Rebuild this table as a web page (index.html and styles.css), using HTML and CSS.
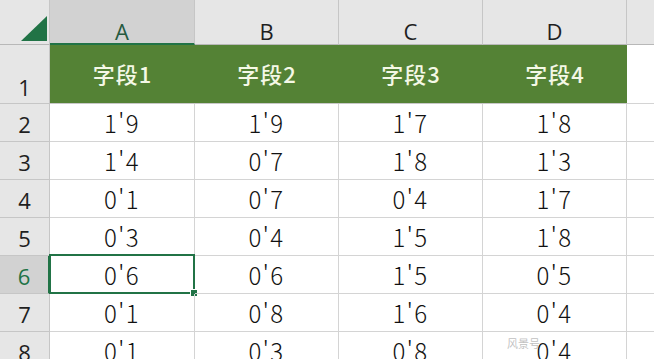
FILE: index.html
```html
<!DOCTYPE html>
<html lang="zh">
<head>
<meta charset="utf-8">
<link rel="stylesheet" href="styles.css">
</head>
<body>
<div class="sheet">
  <div class="corner"><svg class="tri" width="50" height="45" viewBox="0 0 50 45"><polygon points="21,41 47,41 47,16" fill="#217346"/></svg></div>
  <div class="colh sel">A</div>
  <div class="colh">B</div>
  <div class="colh">C</div>
  <div class="colh">D</div>
  <div class="colh last"></div>

  <div class="rowh r1">1</div>
  <div class="head">字段1</div>
  <div class="head">字段2</div>
  <div class="head">字段3</div>
  <div class="head">字段4</div>
  <div class="cell last"></div>

  <div class="rowh">2</div>
  <div class="cell">1'9</div><div class="cell">1'9</div><div class="cell">1'7</div><div class="cell">1'8</div><div class="cell last"></div>

  <div class="rowh">3</div>
  <div class="cell">1'4</div><div class="cell">0'7</div><div class="cell">1'8</div><div class="cell">1'3</div><div class="cell last"></div>

  <div class="rowh">4</div>
  <div class="cell">0'1</div><div class="cell">0'7</div><div class="cell">0'4</div><div class="cell">1'7</div><div class="cell last"></div>

  <div class="rowh">5</div>
  <div class="cell">0'3</div><div class="cell">0'4</div><div class="cell">1'5</div><div class="cell">1'8</div><div class="cell last"></div>

  <div class="rowh selrow">6</div>
  <div class="cell active">0'6<span class="frame"></span><span class="handle"></span></div><div class="cell">0'6</div><div class="cell">1'5</div><div class="cell">0'5</div><div class="cell last"></div>

  <div class="rowh">7</div>
  <div class="cell">0'1</div><div class="cell">0'8</div><div class="cell">1'6</div><div class="cell">0'4</div><div class="cell last"></div>

  <div class="rowh">8</div>
  <div class="cell">0'1</div><div class="cell">0'3</div><div class="cell">0'8</div><div class="cell">0'4</div><div class="cell last"></div>
</div>
<div class="watermark">风景号</div>
</body>
</html>
```
FILE: styles.css
```css
* { box-sizing: border-box; }
html, body { margin: 0; padding: 0; background: #fff; overflow: hidden; }
body { width: 654px; height: 359px; position: relative; }
.sheet {
  display: grid;
  grid-template-columns: 50px 145px 144px 144px 144px 27px;
  grid-template-rows: 45px 59px repeat(7, 38px);
  font-family: "Noto Sans CJK SC", "Noto Sans", sans-serif;
}
.corner {
  background: #e6e6e6;
  border-right: 1px solid #c6c6c6;
  border-bottom: 1px solid #b8b8b8;
  position: relative;
}
.tri { display: block; }
.colh {
  background: #e6e6e6;
  border-right: 1px solid #c6c6c6;
  border-bottom: 1px solid #b8b8b8;
  font-family: "Open Sans", "Liberation Sans", sans-serif;
  font-size: 22px;
  font-weight: 400;
  color: #1f1f1f;
  display: flex;
  align-items: flex-end;
  justify-content: center;
  padding-bottom: 2px;
  line-height: 1;
}
.colh.sel {
  background: #d2d2d2;
  color: #265a40;
  border-bottom: 2px solid #217346;
  padding-bottom: 1px;
}
.colh.last { border-right: none; }
.rowh {
  background: #e6e6e6;
  border-right: 1px solid #c6c6c6;
  border-bottom: 1px solid #c6c6c6;
  font-family: "Open Sans", "Liberation Sans", sans-serif;
  font-size: 22px;
  font-weight: 400;
  color: #1f1f1f;
  display: flex;
  align-items: center;
  justify-content: center;
  line-height: 1;
  padding-top: 2px;
}
.rowh.r1 { align-items: flex-end; padding-bottom: 5px; }
.rowh.selrow {
  background: #d2d2d2;
  color: #217346;
  border-right: 2px solid #217346;
}
.head {
  background: #548235;
  color: #f4f8e6;
  font-size: 22px;
  font-weight: 500;
  letter-spacing: 1px;
  display: flex;
  align-items: center;
  justify-content: center;
  border-bottom: 1px solid #c8c8c8;
  padding-bottom: 3px;
}
.cell {
  border-right: 1px solid #d4d4d4;
  border-bottom: 1px solid #d4d4d4;
  font-size: 24px;
  font-weight: 300;
  letter-spacing: 1.5px;
  color: #111;
  display: flex;
  align-items: center;
  justify-content: center;
  line-height: 1;
  position: relative;
}
.cell.last { border-right: none; }
.frame {
  position: absolute;
  left: -1px; top: -2px; right: -1px; bottom: -1px;
  border: 2px solid #217346;
}
.handle {
  position: absolute;
  right: -4px; bottom: -4px;
  width: 6px; height: 6px;
  background: #217346;
  border: 1px solid #fff;
  box-sizing: content-box;
}
.watermark {
  position: absolute;
  left: 507px; top: 335px;
  font-family: "Noto Sans CJK SC", sans-serif;
  font-size: 11px;
  color: rgba(150,150,150,0.6);
}
```
